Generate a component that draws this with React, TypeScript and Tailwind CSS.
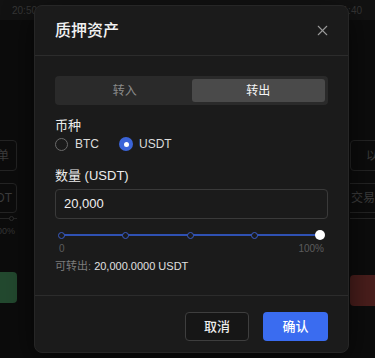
import { X } from 'lucide-react'

const times = ['20:50', '21:00', '21:10', '21:20', '21:30', '21:40']
const marks = [0, 25, 50, 75, 100]

export default function App() {
  return (
    <div
      className="relative w-[375px] h-[358px] overflow-hidden bg-[#0c0c0c]"
      style={{ fontFamily: '"Liberation Sans", "Noto Sans CJK SC", sans-serif' }}
    >
      {/* dimmed trading page underneath */}
      <div className="flex h-[20px] items-center bg-[#121212] pl-[12px] gap-[42px] text-[10px] text-[#363636]">
        {times.map(t => (
          <span key={t} className="w-[23px]">{t}</span>
        ))}
      </div>
      <div className="flex h-[338px]">
        <div className="w-[18px] overflow-hidden pt-[120px]">
          <div className="ml-[-52px] w-[69px]">
            <div className="h-[31px] rounded border border-[#242424] flex items-center justify-end pr-[7px] text-[12px] text-[#3c3c3c]">单</div>
            <div className="mt-[12px] h-[30px] rounded border border-[#242424] flex items-center justify-end pr-[4px] text-[12px] text-[#3c3c3c]">DT</div>
            <div className="mt-[5px] relative h-px bg-[#262626]">
              <div className="absolute right-[3px] top-[-2px] w-[5px] h-[5px] rounded-full border border-[#2e2e2e] bg-[#0c0c0c]" />
            </div>
            <div className="mt-[6px] text-right pr-[2px] text-[9px] text-[#363636]">100%</div>
            <div className="mt-[33px] h-[31px] rounded bg-[#23492f]" />
          </div>
        </div>
        <div className="w-[332px]" />
        <div className="flex-1 overflow-hidden pt-[120px]">
          <div className="w-[80px]">
            <div className="h-[31px] rounded border border-[#242424] flex items-center pl-[15px] text-[12px] text-[#3c3c3c]">以</div>
            <div className="mt-[12px] h-[30px] border-y border-[#242424] flex items-center pl-[1px] text-[12px] text-[#3c3c3c]">交易数量</div>
            <div className="mt-[5px] h-px bg-[#262626]" />
            <div className="mt-[56px] h-[31px] rounded bg-[#4a1e1c]" />
          </div>
        </div>
      </div>

      {/* modal */}
      <div className="absolute left-[34px] top-[5px] w-[315px] h-[348px] flex flex-col rounded-lg border border-[#262626] bg-[#1b1b1b] shadow-[0_8px_30px_rgba(0,0,0,0.6)]">
        <div className="h-[50px] shrink-0 flex items-center justify-between px-5 border-b border-[#2c2c2c]">
          <span className="text-[16px] font-medium text-[#f2f2f2]">质押资产</span>
          <X size={17} strokeWidth={1.5} className="text-[#9a9a9a] mr-[-3px]" />
        </div>

        <div className="px-5 pt-5 pb-[22px] border-b border-[#2c2c2c]">
          <div className="h-[29px] p-[3px] flex rounded bg-[#2a2a2a] text-[12px]">
            <div className="flex-1 flex items-center justify-center text-[#8a8a8a]">转入</div>
            <div className="flex-1 flex items-center justify-center rounded-[3px] bg-[#4a4a4a] text-[#f5f5f5]">转出</div>
          </div>

          <div className="mt-3 h-[18px] text-[13px] leading-[18px] text-[#ececec]">币种</div>
          <div className="h-[18px] flex items-center text-[12px] text-[#dcdcdc]">
            <div className="w-[13px] h-[13px] rounded-full border border-[#6a6a6a]" />
            <span className="ml-[7px]">BTC</span>
            <div className="ml-[20px] w-[14px] h-[14px] rounded-full bg-[#3b64d8] flex items-center justify-center">
              <div className="w-[5px] h-[5px] rounded-full bg-white" />
            </div>
            <span className="ml-[6px]">USDT</span>
          </div>

          <div className="mt-[14px] h-[18px] text-[13px] leading-[18px] text-[#ececec]">数量 (USDT)</div>
          <div className="mt-1 h-[30px] flex items-center px-[8px] rounded border border-[#3a3a3a] text-[13px] text-[#f0f0f0]">
            20,000
          </div>

          <div className="mt-[11px] h-[10px] px-[3px] relative flex items-center">
            <div className="absolute left-[6px] right-[7px] h-[2px] bg-[#2f51b3]" />
            <div className="relative flex-1 flex items-center justify-between">
              {marks.map(m =>
                m === 100 ? (
                  <div key={m} className="w-[10px] h-[10px] rounded-full bg-white" />
                ) : (
                  <div key={m} className="w-[7px] h-[7px] rounded-full border-[1.5px] border-[#3a5cc4] bg-[#1b1b1b]" />
                )
              )}
            </div>
          </div>
          <div className="mt-[3px] h-[12px] flex justify-between px-[4px] text-[10px] leading-[12px] text-[#5c5c5c]">
            <span>0</span>
            <span>100%</span>
          </div>
          <div className="mt-1 text-[11px] leading-[14px]">
            <span className="text-[#7c7c7c]">可转出: </span>
            <span className="text-[#e0e0e0]">20,000.0000 USDT</span>
          </div>
        </div>

        <div className="flex justify-end gap-[14px] px-5 pt-4">
          <button className="w-[64px] h-[29px] rounded border border-[#3e3e3e] bg-[#161616] text-[13px] font-medium text-[#ededed]">取消</button>
          <button className="w-[65px] h-[29px] rounded bg-[#3a6cf0] text-[13px] font-medium text-white">确认</button>
        </div>
      </div>
    </div>
  )
}
